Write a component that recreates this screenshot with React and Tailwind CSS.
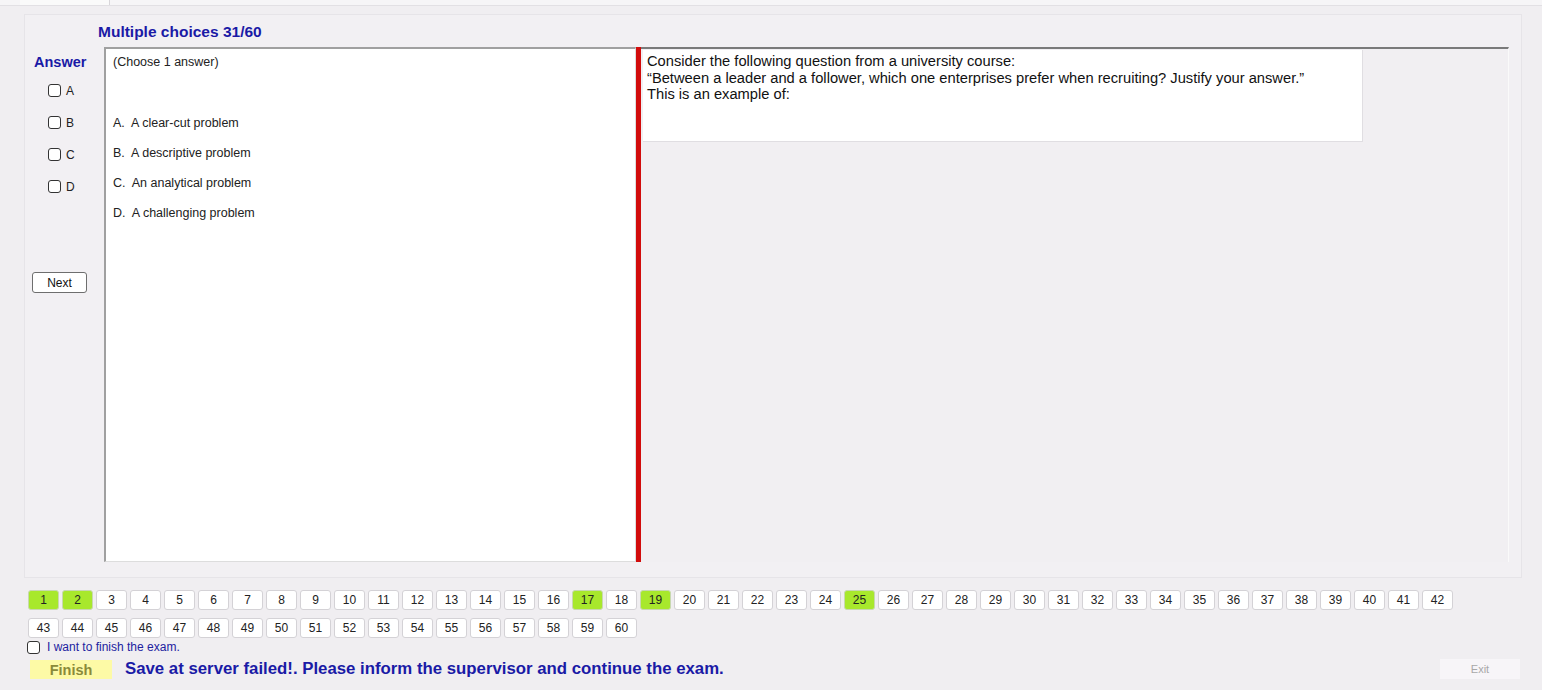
const options = [
  "A.  A clear-cut problem",
  "B.  A descriptive problem",
  "C.  An analytical problem",
  "D.  A challenging problem",
];

const answered = [1, 2, 17, 19, 25];

function Box({ className = "" }) {
  return (
    <span
      className={
        "inline-block w-[13px] h-[13px] rounded-[3px] border border-[#333] bg-white " +
        className
      }
    />
  );
}

function NumButton({ n }) {
  const done = answered.includes(n);
  return (
    <div
      className={
        "w-[31px] h-[20px] flex items-center justify-center rounded-[3px] border text-[12px] " +
        (done
          ? "bg-[#a8e82c] border-[#c8d8b0] text-[#222]"
          : "bg-white border-[#d4d2d6] text-[#222]")
      }
    >
      {n}
    </div>
  );
}

export default function App() {
  const row1 = Array.from({ length: 42 }, (_, i) => i + 1);
  const row2 = Array.from({ length: 18 }, (_, i) => i + 43);

  return (
    <div
      className="w-[1542px] h-[690px] bg-[#f0eef1] flex flex-col overflow-hidden"
      style={{ fontFamily: '"Liberation Sans", Arial, sans-serif' }}
    >
      {/* tab strip */}
      <div className="h-[6px] flex border-b border-[#e2e0e4] bg-[#f6f5f7]">
        <div className="ml-[20px] w-[90px] bg-[#fafafa] border-r border-[#d8d6da]" />
      </div>

      {/* main panel */}
      <div className="mt-[8px] ml-[24px] w-[1498px] h-[564px] bg-[#f2f0f3] border border-[#e6e4e8] flex flex-col">
        <div className="pl-[73px] pt-[8px] h-[32px] text-[15.5px] leading-[18px] font-bold text-[#1a1aa6]">
          Multiple choices 31/60
        </div>

        <div className="flex h-[515px]">
          {/* answer column */}
          <div className="w-[79px] flex flex-col">
            <div className="pl-[9px] pt-[7px] text-[14.5px] leading-[17px] font-bold text-[#1a1aa6]">
              Answer
            </div>
            <div className="flex flex-col pl-[23px] mt-[13px] gap-[19px]">
              {["A", "B", "C", "D"].map((l) => (
                <label key={l} className="flex items-center gap-[5px] h-[13px] text-[12px] text-[#222]">
                  <Box />
                  {l}
                </label>
              ))}
            </div>
            <button className="mt-[79px] ml-[7px] w-[55px] h-[21px] bg-white border border-[#6e6e6e] rounded-[3px] text-[12px] text-[#111]">
              Next
            </button>
          </div>

          {/* options box */}
          <div className="w-[532px] bg-white border-l-2 border-t-2 border-[#a0a0a0] border-r border-b border-r-[#ddd] border-b-[#ddd] pl-[7px] pt-[4px] text-[12.5px] text-[#222]">
            <div className="h-[22px]">(Choose 1 answer)</div>
            <div className="mt-[39px] flex flex-col gap-[14px]">
              {options.map((o) => (
                <div key={o} className="h-[16px] whitespace-pre">
                  {o}
                </div>
              ))}
            </div>
          </div>

          {/* splitter */}
          <div className="w-[5px] bg-[#d20c0c]" />

          {/* question area */}
          <div className="w-[868px] border-t-2 border-[#7a7a7a] border-r border-r-[#fafafa] pl-[2px] pt-[1px] bg-[#f1eff2]">
            <div className="w-[720px] h-[92px] bg-white border-b border-r border-[#e0dee2] pl-[4px] pt-[3px] text-[14.7px] leading-[16.5px] text-[#111]">
              <div>Consider the following question from a university course:</div>
              <div>“Between a leader and a follower, which one enterprises prefer when recruiting? Justify your answer.”</div>
              <div>This is an example of:</div>
            </div>
          </div>
        </div>
      </div>

      {/* number grid */}
      <div className="pl-[28px] mt-[12px] flex flex-col gap-[8px]">
        <div className="flex gap-[3px]">
          {row1.map((n) => (
            <NumButton key={n} n={n} />
          ))}
        </div>
        <div className="flex gap-[3px]">
          {row2.map((n) => (
            <NumButton key={n} n={n} />
          ))}
        </div>
      </div>

      <label className="pl-[27px] mt-[1px] flex items-center gap-[7px] h-[16px] text-[12px] text-[#2222a0]">
        <Box />
        I want to finish the exam.
      </label>

      <div className="flex items-center mt-[3px] h-[22px]">
        <button className="ml-[30px] w-[82px] h-[19px] bg-[#fdfaa6] text-[14.5px] font-bold text-[#8a8a3a]">
          Finish
        </button>
        <div className="ml-[13px] text-[16.8px] font-bold text-[#1a1aa6]">
          Save at server failed!. Please inform the supervisor and continue the exam.
        </div>
        <button className="ml-auto mr-[22px] w-[80px] h-[20px] bg-[#f7f5f8] text-[11px] text-[#a8a8a8]">
          Exit
        </button>
      </div>
    </div>
  );
}
